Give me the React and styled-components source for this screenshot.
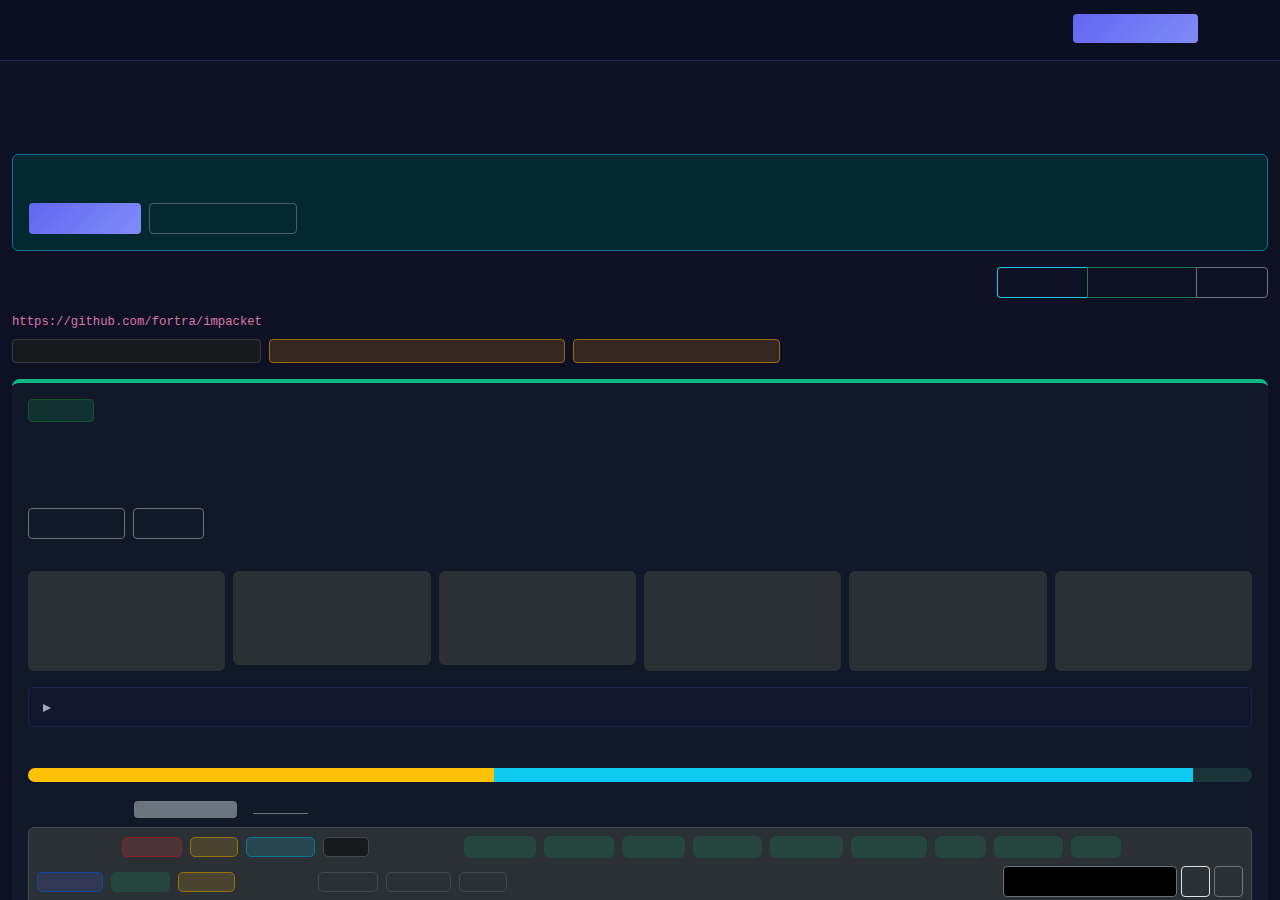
import React from "react";
import styled, { createGlobalStyle } from "styled-components";

const GlobalStyle = createGlobalStyle`
  html, body {
    margin: 0;
    padding: 0;
    background: #0e1024;
    font-family: Inter, "Noto Sans", sans-serif;
  }
  * { box-sizing: border-box; }
`;

const Header = styled.header`
  height: 61px;
  background: #0c0e21;
  border-bottom: 1px solid #26274d;
  display: flex;
  justify-content: flex-end;
  align-items: flex-start;
  padding: 14px 82px 0 0;
`;

const GradientButton = styled.button`
  width: ${(p) => p.$w}px;
  height: ${(p) => p.$h}px;
  border: none;
  border-radius: 4px;
  background: linear-gradient(135deg, #6366f1, #818cf8);
  padding: 0;
`;

const OutlineButton = styled.button`
  width: ${(p) => p.$w}px;
  height: 31px;
  background: transparent;
  border: 1px solid ${(p) => p.$border || "#6b7280"};
  border-radius: 4px;
  padding: 0;
`;

const Main = styled.main`
  padding: 0 12px 40px;
`;

const Blank = styled.div`
  height: ${(p) => p.$h}px;
`;

const Banner = styled.section`
  height: 97px;
  background: #032830;
  border: 1px solid #0e7490;
  border-radius: 6px;
  display: flex;
  align-items: flex-end;
  gap: 8px;
  padding: 0 16px 16px;
`;

const SegmentRow = styled.div`
  display: flex;
  justify-content: flex-end;
  margin-top: 16px;
`;

const Segment = styled.button`
  width: ${(p) => p.$w}px;
  height: 31px;
  background: transparent;
  padding: 0;
  border: 1px solid ${(p) => p.$border};
  border-right-width: ${(p) => (p.$last ? 1 : 0)}px;
  border-radius: ${(p) => (p.$first ? "4px 0 0 4px" : p.$last ? "0 4px 4px 0" : "0")};
`;

const RepoLink = styled.a`
  display: block;
  margin-top: 15px;
  font-family: "Liberation Mono", monospace;
  font-size: 12.25px;
  line-height: 18px;
  color: #de77a8;
  text-decoration: none;
`;

const TagRow = styled.div`
  display: flex;
  gap: 8px;
  margin-top: 8px;
`;

const Tag = styled.span`
  width: ${(p) => p.$w}px;
  height: 24px;
  border-radius: 4px;
  background: ${(p) => p.$bg};
  border: 1px solid ${(p) => p.$border};
`;

const Card = styled.section`
  margin-top: 16px;
  background: #111827;
  border-top: 4px solid #10b981;
  border-radius: 8px;
  padding: 16px;
`;

const Badge = styled.span`
  display: block;
  width: 66px;
  height: 23px;
  background: #0f3230;
  border: 1px solid #14532d;
  border-radius: 4px;
`;

const ButtonRow = styled.div`
  display: flex;
  gap: 8px;
`;

const StatGrid = styled.div`
  display: grid;
  grid-template-columns: repeat(6, 1fr);
  gap: 8px;
  align-items: start;
  margin-top: 32px;
`;

const StatCard = styled.div`
  height: ${(p) => p.$h}px;
  background: #2b3035;
  border-radius: 6px;
`;

const Details = styled.details`
  margin-top: 16px;
  background: #13172d;
  border: 1px solid #1f2250;
  border-radius: 4px;
`;

const Summary = styled.summary`
  height: 38px;
  list-style: none;
  display: flex;
  align-items: center;
  padding: 1px 0 0 14px;
  &::-webkit-details-marker { display: none; }
  &::before {
    content: "";
    width: 0;
    height: 0;
    border-top: 4.5px solid transparent;
    border-bottom: 4.5px solid transparent;
    border-left: 8px solid #a3a8b8;
  }
`;

const Progress = styled.div`
  margin-top: 41px;
  height: 14px;
  border-radius: 7px;
  background: #1a3438;
  overflow: hidden;
  display: flex;
`;

const Bar = styled.div`
  height: 100%;
  background: ${(p) => p.$color};
`;

const LegendRow = styled.div`
  display: flex;
  align-items: flex-start;
  margin-top: 19px;
  padding-left: 106px;
  gap: 16px;
`;

const Pill = styled.span`
  width: 103px;
  height: 17px;
  border-radius: 4px;
  background: #6c757d;
`;

const Underline = styled.span`
  width: 55px;
  height: 13px;
  border-bottom: 1px solid #6c757d;
`;

const Panel = styled.div`
  margin-top: 9px;
  background: #2b3035;
  border: 1px solid #464b52;
  border-radius: 6px;
  padding: 8px;
  display: flex;
  flex-direction: column;
  gap: 8px;
`;

const PanelRow = styled.div`
  display: flex;
  align-items: center;
  gap: 8px;
  height: ${(p) => p.$h}px;
`;

const Gap = styled.span`
  width: ${(p) => p.$w}px;
  flex: none;
`;

const Chip = styled.span`
  flex: none;
  width: ${(p) => p.$w}px;
  height: ${(p) => p.$h || 20}px;
  border-radius: ${(p) => (p.$h ? 6 : 5)}px;
  background: ${(p) => p.$bg};
  border: 1px solid ${(p) => p.$border};
`;

const Search = styled.input`
  margin-left: auto;
  width: 174px;
  height: 31px;
  background: #000;
  border: 1px solid #6b7280;
  border-radius: 4px;
`;

const IconButton = styled.button`
  width: 29px;
  height: 31px;
  background: transparent;
  border: 1px solid ${(p) => (p.$active ? "#dee2e6" : "#6b7280")};
  border-radius: 4px;
  padding: 0;
  margin-left: -4px;
`;

const tags = [
  { w: 249, bg: "#18191c", border: "#3a3c40" },
  { w: 296, bg: "#352622", border: "#9a6a08" },
  { w: 207, bg: "#352622", border: "#9a6a08" },
];

const stats = [100, 94, 94, 100, 100, 100];

const green = { bg: "#25463f", border: "#1d4a39" };
const greenChips = [72, 70, 63, 69, 73, 76, 51, 69, 50];

export default function App() {
  return (
    <>
      <GlobalStyle />
      <Header>
        <GradientButton $w={125} $h={29} />
      </Header>
      <Main>
        <Blank $h={93} />
        <Banner>
          <GradientButton $w={112} $h={31} />
          <OutlineButton $w={148} $border="#4b5e66" />
        </Banner>
        <SegmentRow>
          <Segment $w={90} $border="#22c5e0" $first />
          <Segment $w={109} $border="#1f7a4a" />
          <Segment $w={72} $border="#6b7280" $last />
        </SegmentRow>
        <RepoLink href="https://github.com/fortra/impacket">
          https://github.com/fortra/impacket
        </RepoLink>
        <TagRow>
          {tags.map((t, i) => (
            <Tag key={i} $w={t.w} $bg={t.bg} $border={t.border} />
          ))}
        </TagRow>
        <Card>
          <Badge />
          <Blank $h={86} />
          <ButtonRow>
            <OutlineButton $w={97} />
            <OutlineButton $w={71} />
          </ButtonRow>
          <StatGrid>
            {stats.map((h, i) => (
              <StatCard key={i} $h={h} />
            ))}
          </StatGrid>
          <Details>
            <Summary />
          </Details>
          <Progress>
            <Bar $color="#ffc107" style={{ width: "38.07%" }} />
            <Bar $color="#0dcaf0" style={{ width: "57.11%" }} />
          </Progress>
          <LegendRow>
            <Pill />
            <Underline />
          </LegendRow>
          <Panel>
            <PanelRow $h={22}>
              <Gap $w={77} />
              <Chip $w={60} $bg="#4a3438" $border="#8a1f26" />
              <Chip $w={48} $bg="#4a432f" $border="#997404" />
              <Chip $w={69} $bg="#26474f" $border="#087990" />
              <Chip $w={46} $bg="#18191b" $border="#45484d" />
              <Gap $w={79} />
              {greenChips.map((w, i) => (
                <Chip key={i} $w={w} $h={22} $bg={green.bg} $border={green.border} />
              ))}
            </PanelRow>
            <PanelRow $h={31}>
              <Chip $w={66} $bg="#323752" $border="#0b4aa8" />
              <Chip $w={59} $bg="#25463f" $border="#1d4a39" />
              <Chip $w={57} $bg="#4a432f" $border="#997404" />
              <Gap $w={67} />
              <Chip $w={60} $bg="transparent" $border="#464b52" />
              <Chip $w={65} $bg="transparent" $border="#464b52" />
              <Chip $w={48} $bg="transparent" $border="#464b52" />
              <Search aria-label="search" />
              <IconButton $active />
              <IconButton />
            </PanelRow>
          </Panel>
        </Card>
      </Main>
    </>
  );
}
